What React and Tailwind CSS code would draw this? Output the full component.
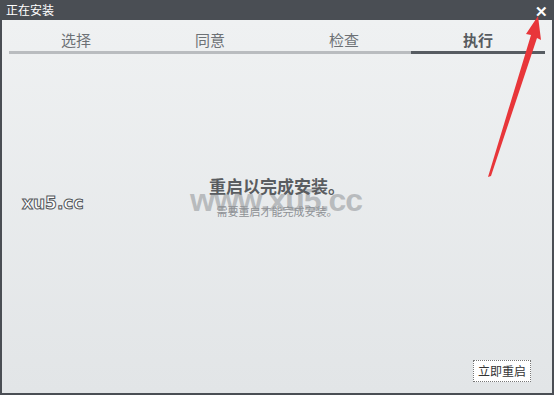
import React from "react";

export default function App() {
  const tabs = ["选择", "同意", "检查", "执行"];
  return (
    <div className="relative w-[554px] h-[395px] bg-[#4a4e54] flex flex-col font-['Noto_Sans_CJK_SC','Noto_Sans',sans-serif] overflow-hidden">
      <div className="h-[20px] flex items-center justify-between pl-[6px] pr-[6px] text-white">
        <span className="text-[12px] leading-none">正在安装</span>
        <span className="text-[15px] font-bold leading-none">✕</span>
      </div>
      <div className="flex-1 mx-[2px] mb-[2px] bg-gradient-to-b from-[#eff1f2] to-[#e2e5e7] flex flex-col relative">
        <div className="pl-[7px] pr-[7px] pt-[10px]">
          <div className="grid grid-cols-4">
            {tabs.map((t, i) => (
              <div key={t} className="flex flex-col items-center">
                <span
                  className={
                    i === 3
                      ? "text-[15px] leading-[20px] font-bold text-[#575b60]"
                      : "text-[15px] leading-[20px] text-[#6d7175]"
                  }
                >
                  {t}
                </span>
                <div
                  className={
                    i === 3
                      ? "mt-[1px] h-[3px] w-full bg-[#575c62]"
                      : "mt-[1px] h-[3px] w-full bg-[#b9bcbf]"
                  }
                />
              </div>
            ))}
          </div>
        </div>
        <div className="flex-1 flex flex-col items-center pt-[121px] relative">
          <div className="absolute left-[188px] top-[130px] text-[32px] font-bold leading-none text-[#a3a6a9]/70 font-['Liberation_Sans',sans-serif] tracking-[-1px]">
            www.xu5.cc
          </div>
          <div className="absolute left-[20px] top-[141px] text-[17px] font-bold leading-none text-white font-['DejaVu_Sans',sans-serif] [-webkit-text-stroke:1px_#55585c]">
            xu5.cc
          </div>
          <div className="relative text-[17px] leading-[22px] font-bold text-[#595c60]">重启以完成安装。</div>
          <div className="relative mt-[7px] text-[11px] leading-[14px] text-[#8e9195]">需要重启才能完成安装。</div>
        </div>
        <div className="flex justify-end pr-[21px] pb-[11px]">
          <button className="w-[58px] h-[22px] bg-white border border-dotted border-[#777] text-[12px] text-[#333] flex items-center justify-center leading-none">
            立即重启
          </button>
        </div>
      </div>
      <svg className="absolute left-0 top-0 pointer-events-none" width="554" height="395">
        <polygon points="488,177 491,176 537,38 541,40 538,16 526,34 531,35" fill="#e8363a" />
      </svg>
    </div>
  );
}
